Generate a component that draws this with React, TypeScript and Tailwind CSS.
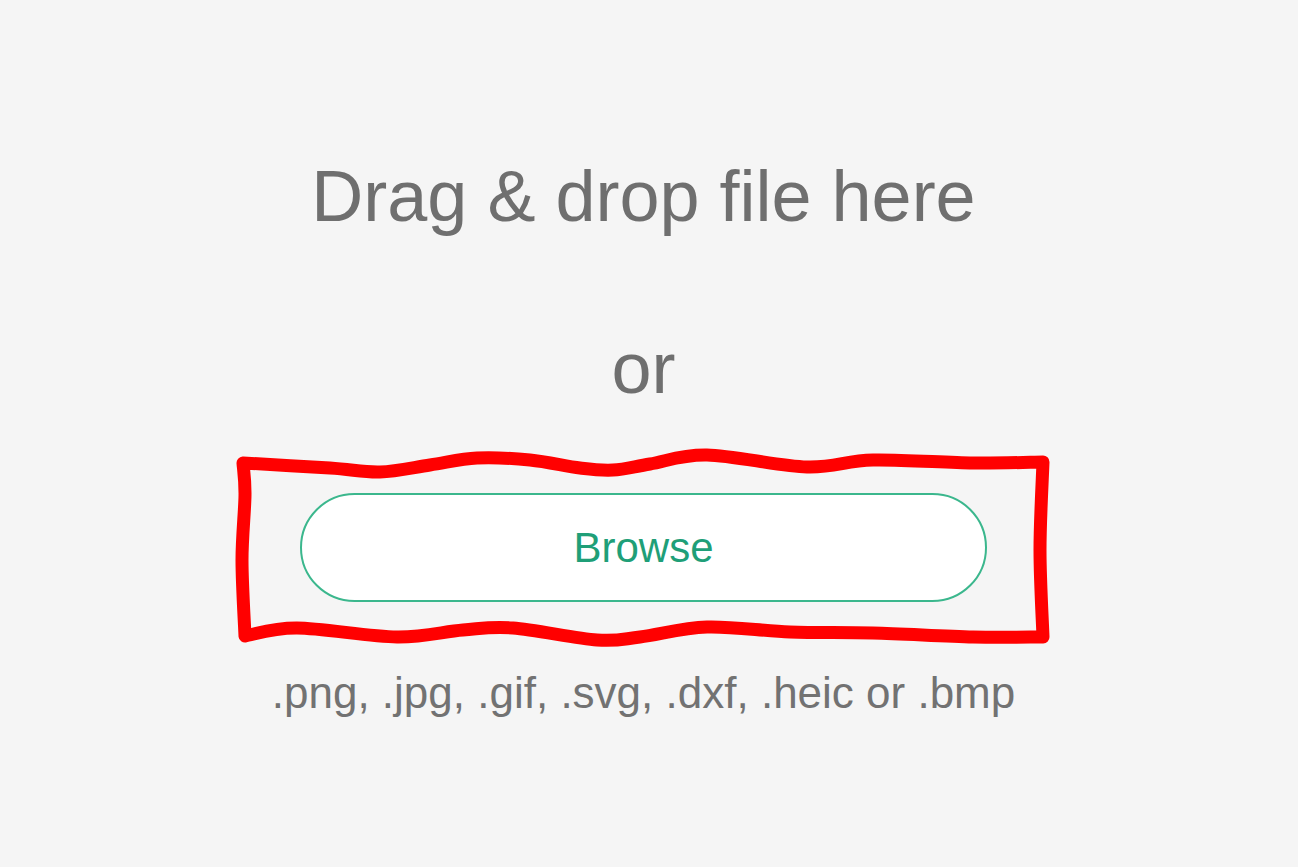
import React from 'react';

const font = { fontFamily: '"Liberation Sans", Arial, sans-serif' };

type Pt = [number, number];

// catmull-rom through the points, as cubic segments
function smooth(pts: Pt[], start: boolean) {
  let d = start ? `M${pts[0][0]} ${pts[0][1]}` : '';
  for (let i = 0; i < pts.length - 1; i++) {
    const p0 = pts[i - 1] ?? pts[i];
    const p1 = pts[i];
    const p2 = pts[i + 1];
    const p3 = pts[i + 2] ?? p2;
    const c1: Pt = [p1[0] + (p2[0] - p0[0]) / 6, p1[1] + (p2[1] - p0[1]) / 6];
    const c2: Pt = [p2[0] - (p3[0] - p1[0]) / 6, p2[1] - (p3[1] - p1[1]) / 6];
    d += ` C${c1[0]} ${c1[1]} ${c2[0]} ${c2[1]} ${p2[0]} ${p2[1]}`;
  }
  return d;
}

const top: Pt[] = [
  [243, 463], [330, 468], [380, 472], [430, 465], [477, 458], [530, 460], [580, 468], [613, 470],
  [650, 464], [707, 455], [807, 467], [873, 460], [973, 463], [1043, 462],
];
const right: Pt[] = [[1043, 462], [1040, 550], [1043, 637]];
const bottom: Pt[] = [
  [1043, 637], [973, 637], [873, 633], [790, 632], [707, 627], [640, 637], [597, 640], [513, 628],
  [463, 630], [397, 637], [297, 628], [245, 636],
];
const left: Pt[] = [[245, 636], [242, 560], [245, 495], [243, 463]];

function Scribble() {
  const d = smooth(top, true) + smooth(right, false) + smooth(bottom, false) + smooth(left, false) + ' Z';
  return (
    <svg className="pointer-events-none absolute inset-0" width="1298" height="867" viewBox="0 0 1298 867">
      <path d={d} fill="none" stroke="#ff0000" strokeWidth="13" strokeLinejoin="round" />
    </svg>
  );
}

export default function App() {
  return (
    <div className="relative flex min-h-screen flex-col items-center bg-[#f5f5f5] pr-[11px] pt-[160px] text-[#6f6f6f]" style={font}>
      <p className="text-[72px] leading-none">Drag &amp; drop file here</p>
      <p className="mt-[100px] text-[72px] leading-none">or</p>
      <button className="mt-[89px] flex h-[109px] w-[687px] items-center justify-center rounded-full border-2 border-[#3bb78d] bg-white text-[42px] leading-none text-[#1f9f78]">
        Browse
      </button>
      <p className="mt-[69px] text-[44px] leading-none text-[#727272]">.png, .jpg, .gif, .svg, .dxf, .heic or .bmp</p>
      <Scribble />
    </div>
  );
}
